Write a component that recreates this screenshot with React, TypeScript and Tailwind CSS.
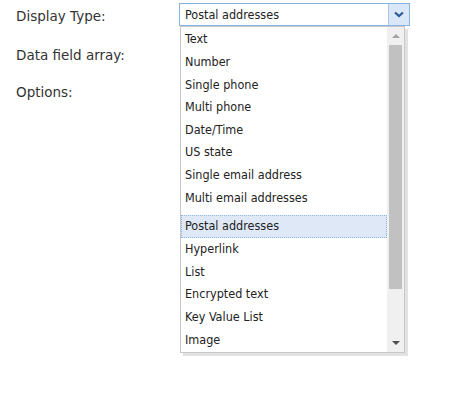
import React from "react";

const items = [
  "Text",
  "Number",
  "Single phone",
  "Multi phone",
  "Date/Time",
  "US state",
  "Single email address",
  "Multi email addresses",
];
const items2 = ["Postal addresses", "Hyperlink", "List", "Encrypted text", "Key Value List", "Image"];

const font = { fontFamily: '"DejaVu Sans Condensed", "DejaVu Sans", sans-serif' };

export default function App() {
  return (
    <div className="w-[471px] h-[394px] bg-white relative" style={font}>
      <div className="flex pt-[3px]">
        <div
          className="w-[179px] pl-[16px] flex flex-col text-[13.5px] text-[#333]"
          style={{ fontFamily: '"DejaVu Sans", sans-serif' }}
        >
          <div className="h-[25px] flex items-center pt-[2px]">Display Type:</div>
          <div className="h-[38px] flex items-end pb-[1px]">Data field array:</div>
          <div className="h-[37px] flex items-end pb-[1px]">Options:</div>
        </div>
        <div className="relative">
          <div className="w-[231px] h-[23px] border border-[#86b3e2] flex bg-white">
            <div className="flex-1 flex items-center pl-[5px] pt-[1px] text-[12.5px] text-[#222]">Postal addresses</div>
            <div className="w-[21px] h-full bg-[#d9e7f8] border-l border-[#a9c6ea] flex items-center justify-center">
              <svg width="10" height="7" viewBox="0 0 10 7">
                <path d="M1 1.5 L5 5 L9 1.5" stroke="#2b5c95" strokeWidth="2.2" fill="none" />
              </svg>
            </div>
          </div>
          <div className="absolute left-[1px] top-[23px] w-[225px] h-[327px] bg-white border border-[#c8c8c8] shadow-[3px_3px_0_#e2e2e2] flex">
            <div className="flex-1 flex flex-col pt-[1px] text-[12.5px] text-[#222]">
              {items.map((t) => (
                <div key={t} className="h-[22.6px] flex items-center pl-[4px] pt-[1px]">{t}</div>
              ))}
              <div className="h-[6px]" />
              <div className="h-[23px] flex items-center pl-[3px] pt-[1px] bg-[#dfe8f6] border border-dotted border-[#8fb2e6]">
                {items2[0]}
              </div>
              {items2.slice(1).map((t) => (
                <div key={t} className="h-[22.6px] flex items-center pl-[4px] pt-[1px]">{t}</div>
              ))}
            </div>
            <div className="w-[17px] bg-[#f0f0f0] flex flex-col items-center">
              <div className="h-[18px] flex items-center justify-center">
                <svg width="8" height="4" viewBox="0 0 8 4"><path d="M0 4 L4 0 L8 4 Z" fill="#a3a3a3" /></svg>
              </div>
              <div className="w-[13px] h-[244px] bg-[#c1c1c1]" />
              <div className="flex-1" />
              <div className="h-[18px] flex items-center justify-center">
                <svg width="8" height="4" viewBox="0 0 8 4"><path d="M0 0 L8 0 L4 4 Z" fill="#505050" /></svg>
              </div>
            </div>
          </div>
        </div>
      </div>
    </div>
  );
}
